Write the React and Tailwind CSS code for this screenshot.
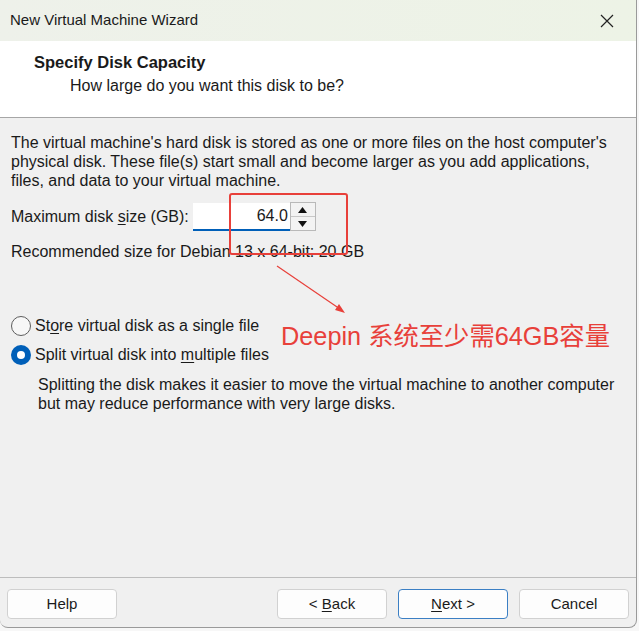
import React from 'react'

const FONT = { fontFamily: '"Liberation Sans", "Noto Sans CJK SC", Arial, sans-serif' }

function U({ children }) {
    return <span className="underline underline-offset-2">{children}</span>
}

function Radio({ checked }) {
    if (checked) {
        return (
            <span className="flex h-[20px] w-[20px] items-center justify-center rounded-full bg-[#005fb8]">
                <span className="h-[8px] w-[8px] rounded-full bg-white" />
            </span>
        )
    }
    return <span className="h-[20px] w-[20px] rounded-full border border-[#5d5d5d] bg-[#f7f7f7]" />
}

function Btn({ children, primary, className = '' }) {
    return (
        <button
            className={`h-[30px] w-[110px] rounded-[4px] border bg-[#fdfdfd] text-[15px] text-[#1a1a1a] ${
                primary ? 'border-[#3b7fc4]' : 'border-[#d1d1d1]'
            } ${className}`}
        >
            {children}
        </button>
    )
}

export default function App() {
    return (
        <div className="h-[631px] w-[639px] overflow-hidden bg-[#f7f7f7]" style={FONT}>
            <div className="relative flex h-[628px] w-[637px] flex-col overflow-hidden rounded-b-[8px] border-r border-b border-[#9a9a9a] bg-[#f0f0f0] text-[#1a1a1a]">
                {/* Title bar */}
                <div className="flex h-[41px] shrink-0 items-center justify-between bg-gradient-to-r from-[#eef1ea] to-[#edf3e6] pl-[10px] pr-[22px]">
                    <span className="text-[15px]">New Virtual Machine Wizard</span>
                    <svg width="14" height="14" viewBox="0 0 14 14">
                        <path d="M1 1 L13 13 M13 1 L1 13" stroke="#222" strokeWidth="1.2" />
                    </svg>
                </div>

                {/* Header */}
                <div className="h-[77px] shrink-0 border-b border-[#a6a6a6] bg-white pt-[11px]">
                    <div className="pl-[34px] text-[16.5px] font-bold leading-[20px]">Specify Disk Capacity</div>
                    <div className="mt-[4px] pl-[70px] text-[16px] leading-[20px]">How large do you want this disk to be?</div>
                </div>

                {/* Body */}
                <div className="flex-1 px-[11px] pt-[15px] text-[16px] leading-[19px]">
                    <p>
                        The virtual machine's hard disk is stored as one or more files on the host computer's physical disk. These file(s) start small and become larger as you add applications, files, and data to your virtual machine.
                    </p>

                    <div className="mt-[12px] flex h-[29px] items-center">
                        <span>Maximum disk <U>s</U>ize (GB):</span>
                        <div className="ml-[4px] flex h-[28px] w-[97px] items-center justify-end border-b-2 border-[#005fb8] bg-white pr-[2px]">
                            64.0
                        </div>
                        <div className="flex h-[29px] w-[26px] flex-col self-start border border-[#b9b9b9] bg-[#f3f3f3]">
                            <div className="flex flex-1 items-center justify-center border-b border-[#c8c8c8]">
                                <svg width="9" height="6" viewBox="0 0 9 6"><path d="M4.5 0 L9 6 L0 6 Z" fill="#111" /></svg>
                            </div>
                            <div className="flex flex-1 items-center justify-center">
                                <svg width="9" height="6" viewBox="0 0 9 6"><path d="M0 0 L9 0 L4.5 6 Z" fill="#111" /></svg>
                            </div>
                        </div>
                    </div>

                    <div className="mt-[11px]">Recommended size for Debian 13 x 64-bit: 20 GB</div>

                    <div className="mt-[55px] flex flex-col gap-[9px] leading-[20px]">
                        <label className="flex items-center gap-[4px]">
                            <Radio />
                            <span>St<U>o</U>re virtual disk as a single file</span>
                        </label>
                        <label className="flex items-center gap-[4px]">
                            <Radio checked />
                            <span>Split virtual disk into <U>m</U>ultiple files</span>
                        </label>
                    </div>

                    <p className="mt-[10px] pl-[27px]">
                        Splitting the disk makes it easier to move the virtual machine to another computer but may reduce performance with very large disks.
                    </p>
                </div>

                {/* Footer */}
                <div className="h-[50px] shrink-0 border-t border-[#bdbdbd] px-[7px] pt-[11px]">
                    <div className="flex items-center">
                        <Btn>Help</Btn>
                        <div className="flex-1" />
                        <Btn>&lt; <U>B</U>ack</Btn>
                        <Btn primary className="ml-[11px]"><U>N</U>ext &gt;</Btn>
                        <Btn className="ml-[11px]">Cancel</Btn>
                    </div>
                </div>

                {/* Annotation overlay */}
                <div className="pointer-events-none absolute left-[229px] top-[193px] h-[62px] w-[119px] rounded-[3px] border-2 border-[#e8403a]" />
                <svg className="pointer-events-none absolute left-0 top-0" width="639" height="631">
                    <line x1="277" y1="266" x2="340" y2="309" stroke="#e8403a" strokeWidth="1.2" />
                    <path d="M345 313 L335 310 L339 304 Z" fill="#e8403a" />
                </svg>
                <div className="pointer-events-none absolute left-[281px] top-[320px] text-[25.3px] leading-[32px] text-[#e8403a]">
                    Deepin 系统至少需64GB容量
                </div>
            </div>
        </div>
    )
}
